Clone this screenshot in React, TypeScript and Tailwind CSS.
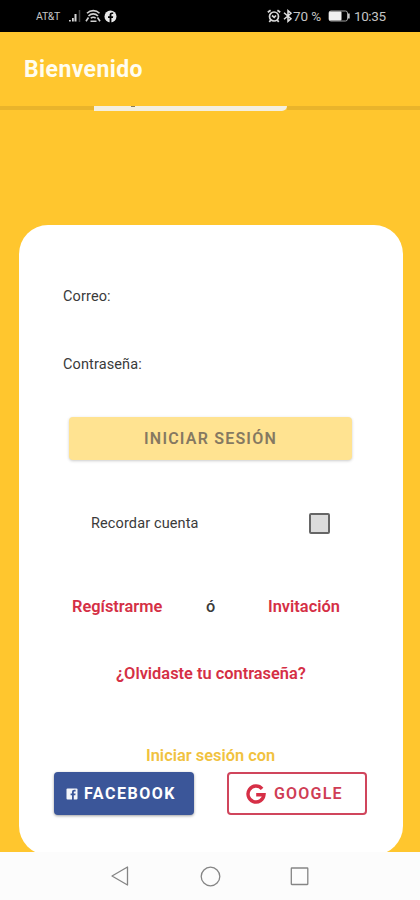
import { useState } from "react";
import type { ReactNode } from "react";

// Barra de estado del teléfono.
function StatusBar() {
  return (
    <div className="flex h-8 shrink-0 items-center bg-black pr-[34px] pl-[36px] text-[#c4c4c4]">
      <span className="w-[32px] pt-px text-[10.500px] tracking-[-0.300px]">AT&amp;T</span>
      <svg width="14" height="14" viewBox="0 0 14 14" className="shrink-0">
        <path d="M1 11h1.800v1.500H1zM4 9h1.800v3.500H4zM6.500 5h2v7.500h-2z" fill="#d5d5d5" />
        <path d="M11.500 1v12" stroke="#454545" strokeWidth="1.500" />
      </svg>
      <svg width="18" height="14" viewBox="0 0 18 14" className="ml-[2px] shrink-0" fill="none" stroke="#d0d0d0">
        <path d="M3 4.200C6.500 .8 12 .8 15.500 4.200M4.500 7c2.800-2.800 6.700-2.800 9.500 0M6.800 9.300c1.500-1.500 3.400-1.500 4.900 0" strokeWidth="1.600" />
        <path d="M4.500 8.500L2 12.300M13.500 8.500l2.500 3.800M6.500 12.300h6" strokeWidth="1.600" />
      </svg>
      <svg width="13" height="13" viewBox="0 0 13 13" className="ml-[2px] shrink-0">
        <circle cx="6.500" cy="6.500" r="6" fill="#e8e8e8" />
        <path d="M5.600 13V8H4V6.200h1.600V4.900c0-1.700.9-2.500 2.400-2.500h1.200V4H8.300c-.7 0-.9.400-.9 1v1.200h1.800L8.900 8H7.400v5z" fill="#000" />
      </svg>
      <div className="ml-auto flex items-center">
        <svg width="14" height="14" viewBox="0 0 14 14" fill="none" stroke="#d8d8d8" strokeWidth="1.700">
          <circle cx="7" cy="7.500" r="4.500" />
          <path d="M.8 3.300L3.600 1.200M13.200 3.300l-2.800-2.100M3.800 11l-1.500 2M10.200 11l1.500 2M5 6.500l2.200 1.800L9 6.500" />
        </svg>
        <svg width="10" height="14" viewBox="0 0 10 14" className="ml-[2px]" fill="none" stroke="#e0e0e0" strokeWidth="1.500">
          <path d="M1 3.800l7 6L5 12.300V1.700L8 4.200l-7 6" />
        </svg>
        <span className="w-[35px] text-[13.500px] tracking-[-0.100px] whitespace-nowrap">70 %</span>
        <svg width="23" height="12" viewBox="0 0 23 12">
          <rect x="1" y="1" width="18.500" height="10" rx="2" fill="none" stroke="#a0a0a0" />
          <rect x="1" y="1.500" width="12.500" height="9" rx="1" fill="#efefef" />
          <path d="M20.800 3.500v5" stroke="#c8c8c8" strokeWidth="1.800" />
        </svg>
        <span className="ml-[3px] w-[32px] text-[13.500px] tracking-[-0.4px]">10:35</span>
      </div>
    </div>
  );
}

function LinkText({ children, className }: { children: ReactNode; className: string }) {
  return (
    <button className={`text-left text-[16.400px] leading-5 font-semibold whitespace-nowrap text-[#d52f45] ${className}`}>
      {children}
    </button>
  );
}

function FacebookIcon() {
  return (
    <svg width="12" height="12" viewBox="0 0 12 12" className="mr-[6px] shrink-0">
      <rect x=".5" y=".5" width="11" height="11" rx="1" fill="#f3f5fa" />
      <path d="M6 12V7.300H4.600V5.400H6V4.200c0-1.600.9-2.400 2.300-2.400h1.300v1.700h-.9c-.7 0-.9.300-.9.900v1h1.800l-.3 1.900H7.800V12z" fill="#3b5699" />
    </svg>
  );
}

function GoogleIcon() {
  return (
    <svg width="20" height="20" viewBox="0 0 20 20" className="mr-[8px] shrink-0">
      <path
        d="M16.100 4.800A8 8 0 1 0 18 10.700H10.200"
        fill="none"
        stroke="#d62f46"
        strokeWidth="3.400"
      />
    </svg>
  );
}

function NavBar() {
  return (
    <div className="flex h-12 shrink-0 items-center justify-center gap-[68px] bg-[#fcfcfc]">
      <svg width="22" height="22" viewBox="0 0 22 22" fill="none" stroke="#858585" strokeWidth="1.300">
        <path d="M18.500 2v18L3 11z" strokeLinejoin="round" />
      </svg>
      <svg width="22" height="22" viewBox="0 0 22 22" fill="none" stroke="#858585" strokeWidth="1.300">
        <circle cx="11.500" cy="11.500" r="9.300" />
      </svg>
      <svg width="22" height="22" viewBox="0 0 22 22" fill="none" stroke="#858585" strokeWidth="1.300">
        <rect x="2.300" y="3" width="16.500" height="16.500" rx=".5" />
      </svg>
    </div>
  );
}

export default function App() {
  const [remember, setRemember] = useState(false);

  return (
    <div className="flex h-[900px] w-[420px] flex-col overflow-hidden bg-[#ffc62e] font-[Roboto,sans-serif]">
      <StatusBar />
      <header className="flex h-[74px] shrink-0 items-center pt-[3px] pl-[24px]">
        <h1 className="text-[23px] font-bold tracking-[0.400px] text-[#fffdf0]">Bienvenido</h1>
      </header>

      {/* Borde del logo que asoma bajo la cabecera */}
      <div className="flex h-[5px] shrink-0">
        <div className="h-[4px] w-[94px] bg-[#e9b42b]" />
        <div className="flex h-[5px] w-[193px] justify-center rounded-br-[8px] bg-[#f4efdf]">
          <div className="mr-[116px] h-px w-[4px] bg-[#8a7d5c]" />
        </div>
        <div className="h-[4px] flex-1 bg-[#e9b42b]" />
      </div>

      <main className="min-h-0 flex-1 overflow-hidden pt-[114px] pr-[17px] pl-[19px]">
        <div className="flex h-[630px] flex-col rounded-[29px] bg-white text-[#3a3a3a]">
          <label className="mt-[62px] ml-[44px] text-[14.500px] leading-5 tracking-[0.120px]">Correo:</label>
          <label className="mt-[48px] ml-[44px] text-[14.500px] leading-5 tracking-[0.120px]">Contraseña:</label>

          <button className="mt-[42px] ml-[50px] h-[43px] w-[283px] shrink-0 rounded-[4px] bg-[#ffe391] text-[16px] font-semibold tracking-[1.200px] text-[#857961] shadow-[0_1px_3px_#00000035]">
            INICIAR SESIÓN
          </button>

          <div className="mt-[52px] flex h-[22px] items-center pr-[73px] pl-[72px]">
            <span className="pt-[2px] text-[14.500px] tracking-[0.120px]">Recordar cuenta</span>
            <button
              role="checkbox"
              aria-checked={remember}
              aria-label="Recordar cuenta"
              onClick={() => setRemember(!remember)}
              className="ml-auto h-[21px] w-[21px] rounded-[2px] border-2 border-[#666] bg-[#dcdcdc] text-xs leading-none"
            >
              {remember ? "✓" : ""}
            </button>
          </div>

          <div className="mt-[63px] flex">
            <LinkText className="ml-[53px] w-[134px]">Regístrarme</LinkText>
            <span className="w-[62px] text-[16.300px] leading-5 font-medium">ó</span>
            <LinkText className="">Invitación</LinkText>
          </div>
          <LinkText className="mt-[47px] ml-[97px]">¿Olvidaste tu contraseña?</LinkText>
          <p className="mt-[62px] ml-[127px] text-[16.400px] leading-5 font-semibold whitespace-nowrap text-[#f1c23f]">
            Iniciar sesión con
          </p>

          <div className="mt-[6px] flex gap-[33px] pl-[35px]">
            <button className="flex h-[43px] w-[140px] items-center rounded-[4px] bg-[#3b5699] pl-[12px] text-[16px] font-bold tracking-[1.500px] text-white shadow-[0_1px_3px_#00000060]">
              <FacebookIcon />
              FACEBOOK
            </button>
            <button className="flex h-[43px] w-[140px] items-center rounded-[4px] border-2 border-[#d0455c] pl-[17px] text-[16px] font-semibold tracking-[1.200px] text-[#cf3d55]">
              <GoogleIcon />
              GOOGLE
            </button>
          </div>
        </div>
      </main>

      <NavBar />
    </div>
  );
}
